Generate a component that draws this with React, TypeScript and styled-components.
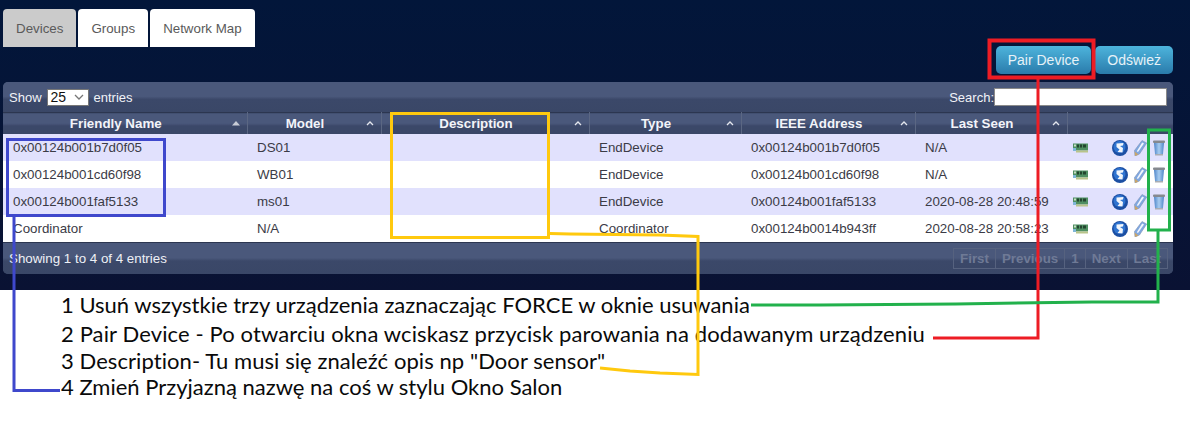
import styled, { createGlobalStyle } from "styled-components";

const rows = [
    { name: "0x00124b001b7d0f05", model: "DS01", type: "EndDevice", ieee: "0x00124b001b7d0f05", seen: "N/A", removable: true },
    { name: "0x00124b001cd60f98", model: "WB01", type: "EndDevice", ieee: "0x00124b001cd60f98", seen: "N/A", removable: true },
    { name: "0x00124b001faf5133", model: "ms01", type: "EndDevice", ieee: "0x00124b001faf5133", seen: "2020-08-28 20:48:59", removable: true },
    { name: "Coordinator", model: "N/A", type: "Coordinator", ieee: "0x00124b0014b943ff", seen: "2020-08-28 20:58:23", removable: false },
];

const columns = [
    { label: "Friendly Name", width: 244, filled: true },
    { label: "Model", width: 134 },
    { label: "Description", width: 208 },
    { label: "Type", width: 152 },
    { label: "IEEE Address", width: 174 },
    { label: "Last Seen", width: 152 },
];

const notes = [
    { text: "1 Usuń wszystkie trzy urządzenia zaznaczając FORCE w oknie usuwania", gap: 5, tracking: 0 },
    { text: "2 Pair Device - Po otwarciu okna wciskasz przycisk parowania na dodawanym urządzeniu", gap: 3, tracking: 0.12 },
    { text: "3 Description- Tu musi się znaleźć opis np \"Door sensor\"", gap: 2, tracking: 0.07 },
    { text: "4 Zmień Przyjazną nazwę na coś w stylu Okno Salon", gap: 0, tracking: 0 },
];

const ChipIcon = () => (
    <svg width="15" height="10" viewBox="0 0 15 10">
        <rect x="0" y="0.5" width="15" height="7" fill="#4f8f62" />
        <rect x="1" y="1.5" width="2" height="2" fill="#c9dfc4" />
        <rect x="4" y="1.5" width="2" height="3" fill="#23452f" />
        <rect x="7" y="1.5" width="2" height="3" fill="#23452f" />
        <rect x="10" y="1.5" width="3" height="3" fill="#23452f" />
        <rect x="3" y="7.5" width="12" height="2" fill="#b9c48a" />
        <rect x="0" y="5" width="3" height="3" fill="#7fb7d8" />
    </svg>
);

const GlobeIcon = () => (
    <svg width="16" height="16" viewBox="0 0 16 16">
        <circle cx="8" cy="8" r="8" fill="#1c4fa3" />
        <circle cx="7.5" cy="7" r="6" fill="#2f74d0" />
        <path d="M4.5 3.5 L11.5 3 L11 5.5 L8 6 L11 8 L10.5 12.5 L5.5 12 L7.5 9.5 L4.5 7 Z" fill="#f2f6fb" />
    </svg>
);

const PencilIcon = () => (
    <svg width="13" height="16" viewBox="0 0 13 16">
        <path d="M8 0.5 L12.7 3 L5.5 14 L1 16 L0.5 10.5 Z" fill="#7fa7e0" stroke="#7f93b5" strokeWidth="0.6" />
        <path d="M8.2 2.5 L10 3.5 L4 12 L2.8 11.2 Z" fill="#f2f6fd" />
        <path d="M0.7 11.5 L4.5 14.4 L1 16 Z" fill="#c9a56a" />
    </svg>
);

const TrashIcon = () => (
    <svg width="12" height="16" viewBox="0 0 12 16">
        <defs>
            <linearGradient id="trashBody" x1="0" y1="0" x2="1" y2="0">
                <stop offset="0" stopColor="#4f86c9" />
                <stop offset="0.5" stopColor="#a8cdf0" />
                <stop offset="1" stopColor="#4f86c9" />
            </linearGradient>
        </defs>
        <rect x="0" y="0.5" width="12" height="2.5" rx="1" fill="#85898f" />
        <path d="M1 3 L11 3 L10 14 L2 14 Z" fill="url(#trashBody)" />
        <rect x="2" y="14" width="8" height="1.5" fill="#a9adb3" />
    </svg>
);

const App = () => {
    return (
        <StPage>
            <GlobalStyle />
            <StDark>
                <StTabs>
                    <StTab active>Devices</StTab>
                    <StTab>Groups</StTab>
                    <StTab>Network Map</StTab>
                </StTabs>
                <StActions>
                    <StActionButton>Pair Device</StActionButton>
                    <StActionButton>Odśwież</StActionButton>
                </StActions>
                <StPanel>
                    <StToolbar>
                        <StShow>
                            Show
                            <StSelect>
                                25
                                <svg width="10" height="6" viewBox="0 0 10 6">
                                    <path d="M1 1 L5 5 L9 1" fill="none" stroke="#777" strokeWidth="1.3" />
                                </svg>
                            </StSelect>
                            entries
                        </StShow>
                        <StSearch>
                            Search:
                            <StSearchBox />
                        </StSearch>
                    </StToolbar>
                    <StTable>
                        <colgroup>
                            {columns.map(c => <col key={c.label} width={c.width} />)}
                            <col width={106} />
                        </colgroup>
                        <thead>
                            <tr>
                                {columns.map(c => (
                                    <StHeadCell key={c.label}>
                                        <StHeadInner>
                                            <StHeadLabel>{c.label}</StHeadLabel>
                                            <svg width="10" height="6" viewBox="0 0 10 6">
                                                {c.filled
                                                    ? <path d="M1 5.5 L5 1 L9 5.5 Z" fill="#c8ccd6" />
                                                    : <path d="M2 5 L5 2 L8 5" fill="none" stroke="#e4e7ee" strokeWidth="1.3" />}
                                            </svg>
                                        </StHeadInner>
                                    </StHeadCell>
                                ))}
                                <StHeadCell />
                            </tr>
                        </thead>
                        <tbody>
                            {rows.map(r => (
                                <StRow key={r.ieee}>
                                    <StCell>{r.name}</StCell>
                                    <StCell>{r.model}</StCell>
                                    <StCell />
                                    <StCell>{r.type}</StCell>
                                    <StCell>{r.ieee}</StCell>
                                    <StCell>{r.seen}</StCell>
                                    <StCell>
                                        <StIcons>
                                            <ChipIcon />
                                            <StGlobeSlot><GlobeIcon /></StGlobeSlot>
                                            <PencilIcon />
                                            {r.removable && <TrashIcon />}
                                        </StIcons>
                                    </StCell>
                                </StRow>
                            ))}
                        </tbody>
                    </StTable>
                    <StFooter>
                        <span>Showing 1 to 4 of 4 entries</span>
                        <StPager>
                            <StPageLink>First</StPageLink>
                            <StPageLink>Previous</StPageLink>
                            <StPageLink>1</StPageLink>
                            <StPageLink>Next</StPageLink>
                            <StPageLink>Last</StPageLink>
                        </StPager>
                    </StFooter>
                </StPanel>
            </StDark>
            <StNotes>
                {notes.map(n => <StNote key={n.text} gap={n.gap} tracking={n.tracking}>{n.text}</StNote>)}
            </StNotes>
            <StOverlay width="1190" height="421" viewBox="0 0 1190 421">
                <g fill="none" strokeWidth="3">
                    <g stroke="#3f48cc">
                        <rect x="7.5" y="139.5" width="157" height="76" />
                        <path d="M14 216 V390.5 H60" />
                    </g>
                    <g stroke="#ffc90e">
                        <rect x="391.5" y="113.5" width="157" height="124" />
                        <path d="M550 233.5 L570 234 L660 235 L698 236.5 V374.5 L660 373 L630 371 L600 368" />
                    </g>
                    <g stroke="#ed1c24">
                        <rect x="989.5" y="40.5" width="104" height="37" strokeWidth="4" />
                        <path d="M1038 78 V338 H933" />
                    </g>
                    <g stroke="#22b14c">
                        <rect x="1148.5" y="130" width="21" height="100" />
                        <path d="M1158 230 V302 H1092 L956 304 L820 305 H751" />
                    </g>
                </g>
            </StOverlay>
        </StPage>
    );
};

export default App;

const GlobalStyle = createGlobalStyle`
    html, body {
        margin : 0;
        padding : 0;
        background : white;
    }
`

const StPage = styled.div`
    position : relative;
    width : 1190px;
    height : 421px;
    overflow : hidden;
    font-family : "Liberation Sans", Arial, sans-serif;
`

const StDark = styled.div`
    height : 290px;
    box-sizing: border-box;
    padding : 9px 17px 0 3px;
    background : linear-gradient(#02163a, #0a1233);
`

const StTabs = styled.div`
    display : flex;
    gap : 2px;
    height : 38px;
`

const StTab = styled.div<{active? : boolean}>`
    display : flex;
    align-items: center;
    padding : 0 13px;
    font-size : 13.33px;
    color : #5a5a5a;
    background : ${({active}) => active ? '#cbcbcb' : 'white'};
    border-radius : 4px 4px 0 0;
`

const StActions = styled.div`
    display : flex;
    justify-content: flex-end;
    gap : 4px;
    margin-top : -1px;
    height : 28px;
`

const StActionButton = styled.div`
    display : flex;
    align-items: center;
    padding : 0 12px;
    font-size : 14px;
    color : #e6f2f8;
    background : linear-gradient(#4db4dc, #2a7bab);
    border-radius : 5px;
`

const StPanel = styled.div`
    margin-top : 8px;
    height : 192px;
    display : flex;
    flex-direction: column;
    border-radius : 5px;
    overflow : hidden;
    background : #3c4a6b;
`

const barBackground = `linear-gradient(#4a587b 0%, #4a587b 48%, #3b4869 58%, #3a4767 100%)`

const StToolbar = styled.div`
    height : 30px;
    flex : none;
    display : flex;
    align-items: center;
    justify-content: space-between;
    padding : 0 6px;
    background : ${barBackground};
    font-size : 13px;
    color : #f1f3f8;
`

const StShow = styled.div`
    display : flex;
    align-items: center;
    gap : 5px;
`

const StSelect = styled.div`
    width : 42px;
    height : 17px;
    box-sizing: border-box;
    display : flex;
    align-items: center;
    justify-content: space-between;
    padding : 0 4px 0 3px;
    background : white;
    border : 1px solid #777;
    color : #111;
    font-size : 14px;
`

const StSearch = styled.div`
    display : flex;
    align-items: center;
`

const StSearchBox = styled.div`
    width : 173px;
    height : 18px;
    box-sizing: border-box;
    background : white;
    border : 1px solid #8a8a8a;
`

const StTable = styled.table`
    width : 1170px;
    table-layout : fixed;
    border-collapse : collapse;
    background : white;
`

const StHeadCell = styled.th`
    height : 21px;
    padding : 0;
    background : ${barBackground};
    border-top : 1px solid #2c3650;
    border-right : 1px solid #5b6783;
    box-sizing: border-box;
    color : #f3f4f9;
    font-size : 13.33px;
    font-weight : 700;
`

const StHeadInner = styled.div`
    display : flex;
    align-items: center;
    padding-right : 6px;
`

const StHeadLabel = styled.span`
    flex : 1;
    text-align : center;
    padding-right : 2px;
`

const StRow = styled.tr`
    height : 27px;
    background : white;
    &:nth-child(odd) {
        background : #e1e1fd;
    }
`

const StCell = styled.td`
    padding : 0 0 0 10px;
    font-size : 13.33px;
    color : #3b3b46;
    white-space : nowrap;
`

const StIcons = styled.div`
    display : flex;
    align-items: center;
    gap : 6px;
    padding-top : 2px;
    margin-left : -4px;
`

const StGlobeSlot = styled.div`
    display : flex;
    margin-left : 18px;
`

const StFooter = styled.div`
    flex : 1;
    display : flex;
    align-items: center;
    justify-content: space-between;
    padding : 0 5px 0 6px;
    border-top : 1px solid #2c3650;
    background : ${barBackground};
    font-size : 13.33px;
    color : #eef0f6;
`

const StPager = styled.div`
    display : flex;
    border : 1px solid #56627f;
`

const StPageLink = styled.div`
    padding : 2px 6px;
    font-weight : 700;
    color : #6f7a96;
    border-left : 1px solid #56627f;
    &:first-child {
        border-left : none;
    }
`

const StNotes = styled.div`
    padding : 3px 0 0 61px;
    font-family : Lato, "Open Sans", sans-serif;
    font-size : 22px;
    color : #0a0a0a;
`

const StNote = styled.div<{gap : number, tracking : number}>`
    height : 24px;
    line-height : 24px;
    margin-bottom : ${({gap}) => gap}px;
    letter-spacing : ${({tracking}) => tracking}px;
    white-space : nowrap;
`

const StOverlay = styled.svg`
    position : absolute;
    top : 0;
    left : 0;
    pointer-events : none;
`
